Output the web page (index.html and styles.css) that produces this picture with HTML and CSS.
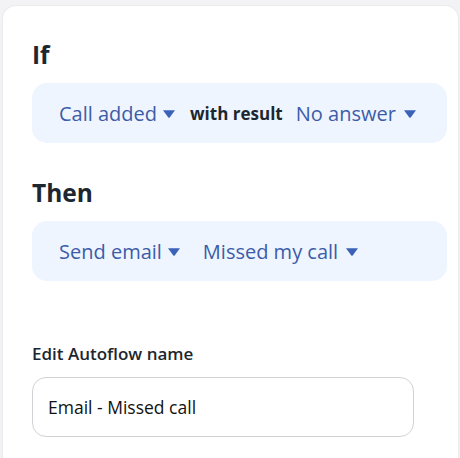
FILE: index.html
```html
<!DOCTYPE html>
<html>
<head>
<meta charset="utf-8">
<link rel="stylesheet" href="styles.css">
</head>
<body>
<div class="card">
  <h2 class="heading">If</h2>
  <div class="panel">
    <span class="dd">Call added<svg class="caret" viewBox="0 0 12 8"><path d="M0 0.2h12l-5.3 7.2a0.9 0.9 0 0 1-1.4 0z"/></svg></span>
    <span class="static">with result</span>
    <span class="dd">No answer<svg class="caret wide" viewBox="0 0 12 8"><path d="M0 0.2h12l-5.3 7.2a0.9 0.9 0 0 1-1.4 0z"/></svg></span>
  </div>
  <h2 class="heading then">Then</h2>
  <div class="panel">
    <span class="dd">Send email<svg class="caret" viewBox="0 0 12 8"><path d="M0 0.2h12l-5.3 7.2a0.9 0.9 0 0 1-1.4 0z"/></svg></span>
    <span class="dd second">Missed my call<svg class="caret wide" viewBox="0 0 12 8"><path d="M0 0.2h12l-5.3 7.2a0.9 0.9 0 0 1-1.4 0z"/></svg></span>
  </div>
  <label class="label" for="name">Edit Autoflow name</label>
  <input class="input" id="name" type="text" value="Email - Missed call">
</div>
</body>
</html>
```
FILE: styles.css
```css
html, body {
  margin: 0;
  padding: 0;
}
body {
  background: #f3f3f5;
  font-family: "Open Sans", "Noto Sans", sans-serif;
  height: 458px;
  overflow: hidden;
}
.card {
  margin: 5px 1px 0 2px;
  background: #fff;
  border: 1px solid #ebebee;
  border-bottom: none;
  border-radius: 14px 14px 0 0;
  padding: 33px 11px 40px 29px;
  height: 460px;
  box-sizing: border-box;
}
.heading {
  margin: 0;
  font-size: 24.5px;
  line-height: 32px;
  font-weight: 700;
  color: #1d2730;
}
.heading.then {
  margin-top: 34px;
}
.panel {
  margin-top: 12px;
  height: 60px;
  background: #eef5fe;
  border-radius: 15px;
  display: flex;
  align-items: center;
  padding-left: 27px;
  padding-top: 1px;
  box-sizing: border-box;
}
.dd {
  display: flex;
  align-items: center;
  font-size: 20px;
  color: #3d5ca8;
  line-height: 24px;
}
.caret {
  flex-shrink: 0;
  width: 12px;
  height: 8px;
  margin-left: 6px;
  fill: #3b62b6;
}
.caret.wide {
  margin-left: 8px;
}
.static {
  font-size: 17px;
  font-weight: 700;
  color: #1d2730;
  margin: 0 13px 0 15px;
}
.dd.second {
  margin-left: 23px;
}
.label {
  display: block;
  margin-top: 61px;
  font-size: 17px;
  line-height: 24px;
  font-weight: 600;
  color: #1d2730;
}
.input {
  display: block;
  margin-top: 11px;
  width: 382px;
  height: 60px;
  box-sizing: border-box;
  border: 1px solid #d2d2d6;
  border-radius: 14px;
  padding: 0 0 0 15px;
  font-family: "Open Sans", "Noto Sans", sans-serif;
  font-size: 17.5px;
  color: #111;
  background: #fff;
  outline: none;
}
```
